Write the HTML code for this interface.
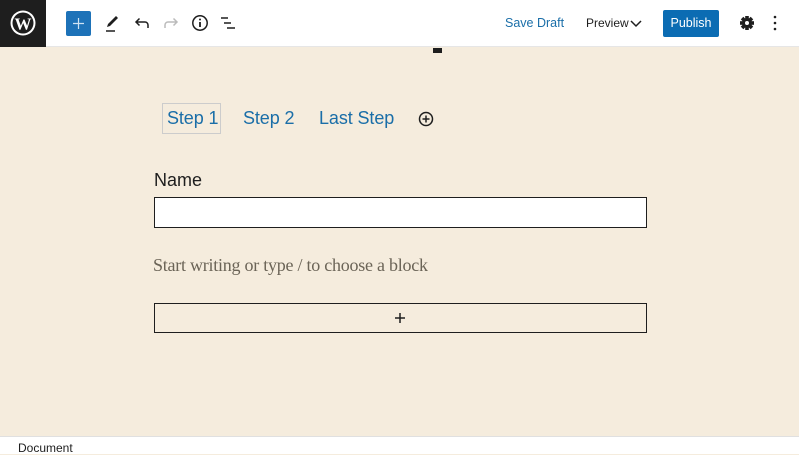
<!DOCTYPE html>
<html><head><style>
*{margin:0;padding:0;box-sizing:border-box}
body{width:799px;height:454px;overflow:hidden;background:#f5ecdd;font-family:"Liberation Sans",sans-serif;position:relative}
.top{position:absolute;left:0;top:0;width:799px;height:47px;background:#fff;border-bottom:1px solid #e6e6e6}
.logo{position:absolute;left:0;top:0;width:46px;height:47px;background:#1e1e1e}
.abs{position:absolute}
.foot{position:absolute;left:0;top:436px;width:799px;height:18px;background:#fff;border-top:1px solid #e0e0e0;font-size:12px;color:#1e1e1e;padding:4px 0 0 18px}
.tab{position:absolute;top:108px;font-size:18px;color:#1a6ea8;letter-spacing:-0.1px}
</style></head><body>
<div class="top">
<div class="logo"><svg width="46" height="47" viewBox="0 0 46 47"><circle cx="23" cy="23" r="12.5" fill="#fff"/><circle cx="23" cy="23" r="10.5" fill="#1e1e1e"/><text x="23" y="29.5" text-anchor="middle" font-family="Liberation Serif" font-weight="bold" font-size="17" fill="#fff">W</text></svg></div>
<div class="abs" style="left:66px;top:11px;width:25px;height:25px;background:#1d72b8;border-radius:2px"><svg width="25" height="25"><path d="M12.5 7v11M7 12.5h11" stroke="#cfe3f3" stroke-width="1.2"/></svg></div>
<svg class="abs" style="left:102px;top:12px" width="22" height="22"><path d="M5 15l1-3 8-8 2 2-8 8z" fill="#1e1e1e"/><path d="M4 19h9" stroke="#1e1e1e" stroke-width="1.5"/></svg>
<svg class="abs" style="left:131px;top:12px" width="22" height="22"><path d="M17 16v-3a3 3 0 0 0-3-3H5M8.5 6.5L5 10l3.5 3.5" fill="none" stroke="#1e1e1e" stroke-width="1.5"/></svg>
<svg class="abs" style="left:160px;top:12px" width="22" height="22"><path d="M5 16v-3a3 3 0 0 1 3-3h9M13.5 6.5L17 10l-3.5 3.5" fill="none" stroke="#bbb" stroke-width="1.5"/></svg>
<svg class="abs" style="left:189px;top:12px" width="22" height="22"><circle cx="11" cy="11" r="7.2" fill="none" stroke="#1e1e1e" stroke-width="1.5"/><path d="M11 10v5" stroke="#1e1e1e" stroke-width="1.8"/><circle cx="11" cy="7.5" r="1" fill="#1e1e1e"/></svg>
<svg class="abs" style="left:218px;top:12px" width="22" height="22"><path d="M3 6h7M6 11h7M9 16h8" stroke="#1e1e1e" stroke-width="1.5"/></svg>
<div class="abs" style="left:505px;top:16px;font-size:12.5px;color:#1a6ea8">Save Draft</div>
<div class="abs" style="left:586px;top:16px;font-size:12px;color:#1e1e1e">Preview</div>
<svg class="abs" style="left:627px;top:14px" width="18" height="18"><path d="M4 7l5 5 5-5" fill="none" stroke="#1e1e1e" stroke-width="1.5"/></svg>
<div class="abs" style="left:663px;top:10px;width:56px;height:27px;background:#0b6cb3;border-radius:2px;color:#fff;font-size:12.5px;text-align:center;line-height:27px">Publish</div>
<svg class="abs" style="left:737px;top:13px" width="20" height="20"><g fill="#1e1e1e" transform="translate(10 10)"><circle r="5"/><g><rect x="-1.8" y="-7" width="3.6" height="14"/><rect x="-1.8" y="-7" width="3.6" height="14" transform="rotate(45)"/><rect x="-1.8" y="-7" width="3.6" height="14" transform="rotate(90)"/><rect x="-1.8" y="-7" width="3.6" height="14" transform="rotate(135)"/></g></g><circle cx="10" cy="10" r="2" fill="#fff"/></svg>
<svg class="abs" style="left:768px;top:13px" width="14" height="20"><circle cx="7" cy="4" r="1.3" fill="#1e1e1e"/><circle cx="7" cy="10" r="1.3" fill="#1e1e1e"/><circle cx="7" cy="16" r="1.3" fill="#1e1e1e"/></svg>
</div>
<div class="abs" style="left:433px;top:48px;width:9px;height:5px;background:#1e1e1e"></div>
<div class="abs" style="left:162px;top:103px;width:59px;height:31px;border:1px solid #ccc"></div>
<div class="tab" style="left:167px">Step 1</div>
<div class="tab" style="left:243px">Step 2</div>
<div class="tab" style="left:319px">Last Step</div>
<svg class="abs" style="left:417px;top:110px" width="18" height="18"><circle cx="9" cy="9" r="6.5" fill="none" stroke="#1e1e1e" stroke-width="1.5"/><path d="M9 5.5v7M5.5 9h7" stroke="#1e1e1e" stroke-width="1.5"/></svg>
<div class="abs" style="left:154px;top:170px;font-size:18px;color:#1e1e1e">Name</div>
<div class="abs" style="left:154px;top:197px;width:493px;height:31px;background:#fff;border:1px solid #1e1e1e"></div>
<div class="abs" style="left:153px;top:255px;font-family:'Liberation Serif',serif;font-size:18px;color:#6b6457;letter-spacing:-0.25px">Start writing or type / to choose a block</div>
<div class="abs" style="left:154px;top:303px;width:493px;height:30px;border:1px solid #1e1e1e"></div>
<svg class="abs" style="left:393px;top:311px" width="14" height="14"><path d="M7 2v10M2 7h10" stroke="#1e1e1e" stroke-width="1.5"/></svg>
<div class="foot">Document</div>
</body></html>
